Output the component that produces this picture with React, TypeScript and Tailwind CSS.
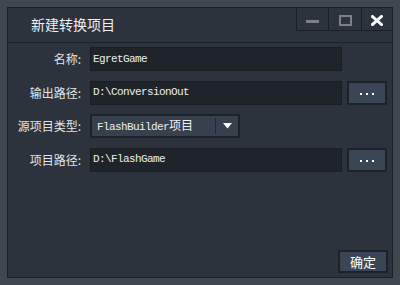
import { useState } from "react";

const labelFont = { fontFamily: '"Noto Sans CJK SC", "Noto Sans", sans-serif' };

const Field = ({ label, children }: { label: string; children: React.ReactNode }) => (
  <div className="flex items-center h-[24px]">
    <div className="w-[73px] shrink-0 text-right text-[12px] text-[#e2e4e6] whitespace-nowrap leading-none">
      {label}
    </div>
    <div className="flex items-center ml-[9px] h-full">{children}</div>
  </div>
);

const TextBox = ({ value }: { value: string }) => (
  <div className="w-[252px] h-[24px] bg-[#1f242b] border border-[#1a1e24] flex items-center pl-[2px] font-['Liberation_Mono',monospace] text-[11px] tracking-[-0.6px] text-[#eceff1]">
    {value}
  </div>
);

const BrowseButton = () => (
  <button className="ml-[5px] w-[40px] h-[24px] bg-[#3a4656] border-2 border-[#1d2228] flex items-center justify-center gap-[4px] pt-[3px]">
    <span className="w-[2px] h-[2px] bg-white" />
    <span className="w-[2px] h-[2px] bg-white" />
    <span className="w-[2px] h-[2px] bg-white" />
  </button>
);

export default function App() {
  const [name] = useState("EgretGame");

  return (
    <div className="w-[400px] h-[285px] bg-[#3f474f] p-[7px]" style={labelFont}>
      <div className="w-full h-full bg-[#2c333d] border border-[#1b2026] flex flex-col">
        {/* Title bar */}
        <div className="h-[35px] flex border-b border-[#1b2026] shrink-0">
          <div className="flex-1 pl-[23px] pt-[6px] text-[14px] text-[#eef0f2] leading-[20px]">
            新建转换项目
          </div>
          <div className="flex h-[23px]">
            <div className="w-[32px] h-full border-l border-b border-[#1b2026] flex items-center justify-center pt-[5px]">
              <span className="w-[13px] h-[3px] bg-[#7b8087]" />
            </div>
            <div className="w-[33px] h-full border-l border-b border-[#1b2026] flex items-center justify-center pt-[3px]">
              <span className="w-[13px] h-[11px] border-2 border-[#7b8087]" />
            </div>
            <div className="w-[31px] h-full border-l border-b border-[#1b2026] flex items-center justify-center pt-[3px]">
              <svg width="12" height="11" viewBox="0 0 12 11">
                <path d="M1.5 1.5 L10.5 9.5 M10.5 1.5 L1.5 9.5" stroke="#ffffff" strokeWidth="3" strokeLinecap="square" />
              </svg>
            </div>
          </div>
        </div>

        {/* Form */}
        <div className="flex flex-col gap-[9.5px] pt-[4px]">
          <Field label="名称:">
            <TextBox value={name} />
          </Field>
          <Field label="输出路径:">
            <TextBox value="D:\ConversionOut" />
            <BrowseButton />
          </Field>
          <div className="flex items-center h-[24px]">
            <div className="w-[73px] shrink-0 text-right text-[12px] text-[#e2e4e6] whitespace-nowrap leading-none flex justify-end">
              <span className="-mr-0">源项目类型:</span>
            </div>
            <div className="ml-[9px] w-[150px] h-[24px] bg-[#37414d] border-2 border-[#1d2228] flex items-center">
              <div className="flex-1 pl-[5px] font-['Liberation_Mono',monospace] text-[11px] tracking-[-0.6px] text-[#eceff1] whitespace-nowrap">
                FlashBuilder<span className="text-[12px] tracking-normal" style={labelFont}>项目</span>
              </div>
              <div className="w-px h-[16px] bg-[#222830]" />
              <div className="w-[22px] flex items-center justify-center">
                <svg width="9" height="6" viewBox="0 0 9 6">
                  <path d="M0 0 H9 L4.5 5.5 Z" fill="#ffffff" />
                </svg>
              </div>
            </div>
          </div>
          <Field label="项目路径:">
            <TextBox value="D:\FlashGame" />
            <BrowseButton />
          </Field>
        </div>

        {/* Footer */}
        <div className="flex-1 flex items-end justify-end pr-[4px] pb-[4px]">
          <button className="w-[50px] h-[23px] bg-[#3a4656] border-2 border-[#1d2228] text-[13px] text-white leading-none flex items-center justify-center">
            确定
          </button>
        </div>
      </div>
    </div>
  );
}
